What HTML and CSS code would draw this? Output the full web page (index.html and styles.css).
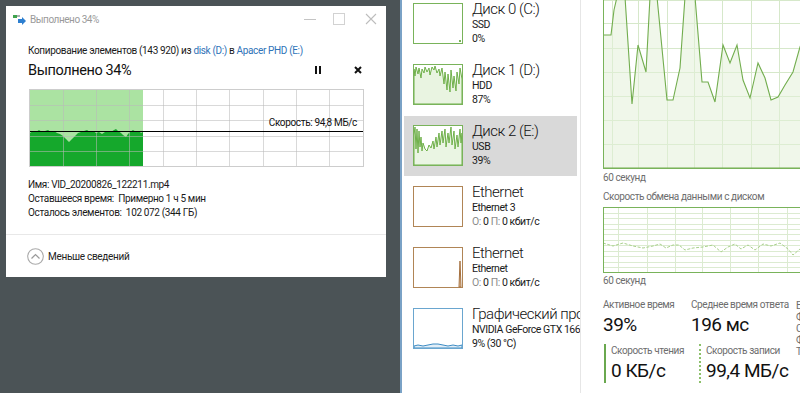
FILE: index.html
```html
<!DOCTYPE html>
<html lang="ru">
<head>
<meta charset="utf-8">
<title>Копирование</title>
<link rel="stylesheet" href="styles.css">
</head>
<body>
<div class="desktop">
  <div class="dialog">
    <div class="titlebar">
      <svg class="title-icon" width="14" height="11" viewBox="0 0 14 11">
        <rect x="0" y="1" width="4" height="3" fill="#3fa34d"/>
        <rect x="4" y="1" width="3" height="2" fill="#a8b0b0"/>
        <path d="M5 5 H9 V3 L13 7 L9 11 V9 H5 Z" fill="#2d7fd0"/>
      </svg>
      <span class="title-text">Выполнено 34%</span>
      <svg class="winctl" width="84" height="26" viewBox="0 0 84 26">
        <line x1="2" y1="13.5" x2="14" y2="13.5" stroke="#c4c4c4"/>
        <rect x="31.5" y="7.5" width="11" height="11" fill="none" stroke="#d2d2d2"/>
        <path d="M64 8 L74 18 M74 8 L64 18" stroke="#bdbdbd" stroke-width="1.1"/>
      </svg>
    </div>
    <div class="content">
      <div class="from">Копирование элементов (143 920) из <span class="link">disk (D:)</span> в <span class="link">Apacer PHD (E:)</span></div>
      <div class="status-row">
        <span class="big">Выполнено 34%</span>
        <span class="ctl-btn"><svg width="10" height="10" viewBox="0 0 10 10"><rect x="2" y="1" width="2" height="8" fill="#111"/><rect x="6" y="1" width="2" height="8" fill="#111"/></svg></span>
        <span class="ctl-btn"><svg width="10" height="10" viewBox="0 0 10 10"><path d="M2 2 L8 8 M8 2 L2 8" stroke="#111" stroke-width="2"/></svg></span>
      </div>
      <div class="copy-graph">
        <svg width="333" height="76" viewBox="0 0 333 76">
          <rect x="0" y="0" width="113" height="76" fill="#abe3a2"/>
          <path d="M0 43 L3 41 L6 42 L9 40 L12 42 L15 41 L18 40 L21 42 L24 41 L27 43 L30 44 L33 46 L36 49 L39 52 L42 49 L45 46 L48 43 L51 42 L54 41 L57 40 L60 42 L63 41 L66 43 L69 42 L72 44 L75 42 L78 41 L81 42 L84 40 L86 39 L88 41 L91 43 L93 45 L96 47 L98 44 L100 42 L103 40 L106 42 L109 41 L111 43 L113 42 L113 76 L0 76 Z" fill="#15a82c"/>
          <g stroke="#b9b9b9" stroke-opacity="0.55" stroke-width="1">
            <line x1="33.5" y1="0" x2="33.5" y2="76"/>
            <line x1="66.5" y1="0" x2="66.5" y2="76"/>
            <line x1="99.5" y1="0" x2="99.5" y2="76"/>
            <line x1="133.5" y1="0" x2="133.5" y2="76"/>
            <line x1="166.5" y1="0" x2="166.5" y2="76"/>
            <line x1="199.5" y1="0" x2="199.5" y2="76"/>
            <line x1="233.5" y1="0" x2="233.5" y2="76"/>
            <line x1="266.5" y1="0" x2="266.5" y2="76"/>
            <line x1="299.5" y1="0" x2="299.5" y2="76"/>
            <line x1="0" y1="15.5" x2="333" y2="15.5"/>
            <line x1="0" y1="30.5" x2="333" y2="30.5"/>
            <line x1="0" y1="46.5" x2="333" y2="46.5"/>
            <line x1="0" y1="61.5" x2="333" y2="61.5"/>
          </g>
          <line x1="0" y1="41.5" x2="333" y2="41.5" stroke="#000" stroke-width="1.2"/>
        </svg>
        <span class="speed">Скорость: 94,8 МБ/с</span>
      </div>
      <div class="info">
        <div>Имя: VID_20200826_122211.mp4</div>
        <div>Оставшееся время:  Примерно 1 ч 5 мин</div>
        <div>Осталось элементов:  102 072 (344 ГБ)</div>
      </div>
    </div>
    <div class="footer">
      <svg width="17" height="17" viewBox="0 0 17 17">
        <circle cx="8.5" cy="8.5" r="7.8" fill="none" stroke="#ababab" stroke-width="1.1"/>
        <path d="M4.5 10.5 L8.5 6.5 L12.5 10.5" fill="none" stroke="#9a9a9a" stroke-width="1.2"/>
      </svg>
      <span class="less">Меньше сведений</span>
    </div>
  </div>
</div>

<div class="taskmgr">
  <div class="list">
    <div class="item">
      <svg class="thumb" width="50" height="41" viewBox="0 0 50 41">
        <rect x="0.5" y="0.5" width="49" height="40" fill="#fff" stroke="#79b35a"/>
        <rect x="46" y="37" width="2" height="2" fill="#79b35a"/>
      </svg>
      <div class="meta">
        <div class="name">Диск 0 (C:)</div>
        <div class="sub">SSD</div>
        <div class="sub">0%</div>
      </div>
    </div>
    <div class="item">
      <svg class="thumb" width="50" height="41" viewBox="0 0 50 41">
        <rect x="0.5" y="0.5" width="49" height="40" fill="#fff" stroke="#79b35a"/>
        <path d="M1 5 L2 12 L3 3 L5 10 L6 4 L8 14 L9 5 L11 9 L12 3 L14 8 L16 4 L17 11 L19 3 L21 6 L22 2 L24 9 L26 5 L27 12 L29 4 L31 20 L32 8 L34 26 L35 10 L37 28 L38 6 L40 24 L41 12 L43 27 L44 8 L46 20 L47 4 L49 15 L49 40 L1 40 Z" fill="#e9f4e1" stroke="#6fb04a" stroke-width="1"/>
        <rect x="0.5" y="0.5" width="49" height="40" fill="none" stroke="#79b35a"/>
      </svg>
      <div class="meta">
        <div class="name">Диск 1 (D:)</div>
        <div class="sub">HDD</div>
        <div class="sub">87%</div>
      </div>
    </div>
    <div class="item selected">
      <svg class="thumb" width="50" height="41" viewBox="0 0 50 41">
        <rect x="0.5" y="0.5" width="49" height="40" fill="#fff" stroke="#79b35a"/>
        <path d="M1 10 L2 2 L3 24 L4 4 L5 28 L6 6 L7 22 L8 12 L9 26 L10 18 L12 24 L14 26 L16 20 L18 23 L20 16 L21 24 L23 12 L24 22 L26 8 L27 20 L29 6 L30 18 L32 4 L33 22 L35 8 L36 18 L38 2 L39 20 L41 6 L42 24 L44 10 L45 22 L47 4 L48 18 L49 8 L49 40 L1 40 Z" fill="#eaf5e3" stroke="#6fb04a" stroke-width="1"/>
        <rect x="0.5" y="0.5" width="49" height="40" fill="none" stroke="#79b35a"/>
      </svg>
      <div class="meta">
        <div class="name">Диск 2 (E:)</div>
        <div class="sub">USB</div>
        <div class="sub">39%</div>
      </div>
    </div>
    <div class="item">
      <svg class="thumb" width="50" height="41" viewBox="0 0 50 41">
        <rect x="0.5" y="0.5" width="49" height="40" fill="#fff" stroke="#b08556"/>
      </svg>
      <div class="meta">
        <div class="name">Ethernet</div>
        <div class="sub">Ethernet 3</div>
        <div class="sub"><span class="dim">О:</span> 0 <span class="dim">П:</span> 0 кбит/с</div>
      </div>
    </div>
    <div class="item">
      <svg class="thumb" width="50" height="41" viewBox="0 0 50 41">
        <rect x="0.5" y="0.5" width="49" height="40" fill="#fff" stroke="#b08556"/>
        <path d="M46 40 L47 14 L48 40 Z" fill="#e9c9a6" stroke="#a5703f" stroke-width="1"/>
      </svg>
      <div class="meta">
        <div class="name">Ethernet</div>
        <div class="sub">Ethernet</div>
        <div class="sub"><span class="dim">О:</span> 0 <span class="dim">П:</span> 0 кбит/с</div>
      </div>
    </div>
    <div class="item">
      <svg class="thumb" width="50" height="41" viewBox="0 0 50 41">
        <rect x="0.5" y="0.5" width="49" height="40" fill="#fff" stroke="#6aa6cf"/>
        <path d="M1 38 L5 37 L10 38 L15 37 L20 36 L25 36 L30 37 L35 38 L40 37 L45 38 L49 37 L49 40 L1 40 Z" fill="#e2eef7" stroke="#3d8cc4" stroke-width="1"/>
        <rect x="0.5" y="0.5" width="49" height="40" fill="none" stroke="#6aa6cf"/>
      </svg>
      <div class="meta">
        <div class="name">Графический процессор 0</div>
        <div class="sub">NVIDIA GeForce GTX 1660 SUPER</div>
        <div class="sub">9% (30 °C)</div>
      </div>
    </div>
  </div>

  <div class="detail">
    <svg class="big-graph" width="220" height="169" viewBox="0 0 220 169">
      <g stroke="#d6e8ca" stroke-width="1">
        <line x1="9.5" y1="0" x2="9.5" y2="168"/>
        <line x1="35.5" y1="0" x2="35.5" y2="168"/>
        <line x1="64.5" y1="0" x2="64.5" y2="168"/>
        <line x1="91.5" y1="0" x2="91.5" y2="168"/>
        <line x1="119.5" y1="0" x2="119.5" y2="168"/>
        <line x1="148.5" y1="0" x2="148.5" y2="168"/>
        <line x1="176.5" y1="0" x2="176.5" y2="168"/>
        <line x1="204.5" y1="0" x2="204.5" y2="168"/>
        <line x1="0" y1="0.5" x2="220" y2="0.5"/>
        <line x1="0" y1="23.5" x2="220" y2="23.5"/>
        <line x1="0" y1="48.5" x2="220" y2="48.5"/>
        <line x1="0" y1="72.5" x2="220" y2="72.5"/>
        <line x1="0" y1="96.5" x2="220" y2="96.5"/>
        <line x1="0" y1="120.5" x2="220" y2="120.5"/>
        <line x1="0" y1="144.5" x2="220" y2="144.5"/>
      </g>
      <path d="M0 35 L8 35 L11 10 L14 -3 L22 -3 L29 104 L35 45 L43 72 L47 -3 L54 -3 L64 100 L70 100 L77 68 L82 -3 L92 -3 L99 82 L105 82 L112 102 L120 45 L127 63 L134 45 L140 80 L147 98 L155 63 L162 78 L168 100 L175 97 L182 85 L190 72 L197 47 L205 25 L220 20 L220 168 L0 168 Z" fill="#e3f0d9" fill-opacity="0.55" stroke="#72ad4e" stroke-width="1.1"/>
      <line x1="0.5" y1="0" x2="0.5" y2="168" stroke="#79b35a"/>
      <line x1="0" y1="168.5" x2="220" y2="168.5" stroke="#79b35a"/>
    </svg>
    <div class="caption cap1">60 секунд</div>
    <div class="caption cap-title">Скорость обмена данными с диском</div>
    <svg class="rate-graph" width="220" height="66" viewBox="0 0 220 66">
      <g stroke="#dcebd1" stroke-width="1">
        <line x1="15.5" y1="0" x2="15.5" y2="66"/>
        <line x1="44.5" y1="0" x2="44.5" y2="66"/>
        <line x1="72.5" y1="0" x2="72.5" y2="66"/>
        <line x1="99.5" y1="0" x2="99.5" y2="66"/>
        <line x1="127.5" y1="0" x2="127.5" y2="66"/>
        <line x1="155.5" y1="0" x2="155.5" y2="66"/>
        <line x1="184.5" y1="0" x2="184.5" y2="66"/>
        <line x1="212.5" y1="0" x2="212.5" y2="66"/>
        <line x1="0" y1="6.5" x2="220" y2="6.5"/>
        <line x1="0" y1="11.5" x2="220" y2="11.5"/>
        <line x1="0" y1="17.5" x2="220" y2="17.5"/>
        <line x1="0" y1="22.5" x2="220" y2="22.5"/>
        <line x1="0" y1="27.5" x2="220" y2="27.5"/>
        <line x1="0" y1="33.5" x2="220" y2="33.5"/>
        <line x1="0" y1="38.5" x2="220" y2="38.5"/>
        <line x1="0" y1="44.5" x2="220" y2="44.5"/>
        <line x1="0" y1="49.5" x2="220" y2="49.5"/>
        <line x1="0" y1="55.5" x2="220" y2="55.5"/>
        <line x1="0" y1="60.5" x2="220" y2="60.5"/>
      </g>
      <path d="M0 36 L10 39 L20 36 L30 39 L40 41 L50 39 L57 37 L63 41 L70 38 L76 38 L82 43 L90 41 L100 40 L110 38 L118 45 L125 40 L132 37 L138 42 L145 38 L152 43 L160 37 L168 39 L177 36 L185 42 L190 48 L197 42 L205 37 L212 40 L220 38" fill="none" stroke="#a9d18c" stroke-width="1" stroke-dasharray="3 1.5"/>
      <rect x="0.5" y="0.5" width="230" height="65" fill="none" stroke="#79b35a"/>
    </svg>
    <div class="caption cap2">60 секунд</div>
    <div class="stats-area">
      <div class="stats-main">
        <div class="stats">
          <div class="stat s1">
            <div class="label">Активное время</div>
            <div class="value">39%</div>
          </div>
          <div class="stat s2">
            <div class="label">Среднее время ответа</div>
            <div class="value">196 мс</div>
          </div>
        </div>
        <div class="stats rw">
          <div class="stat r1">
            <div class="label">Скорость чтения</div>
            <div class="value">0 КБ/с</div>
          </div>
          <div class="stat r2">
            <div class="label">Скорость записи</div>
            <div class="value">99,4 МБ/с</div>
          </div>
        </div>
      </div>
      <div class="props">
        <div>Емкость:</div>
        <div>Форматировано:</div>
        <div>Системный диск:</div>
        <div>Файл подкачки:</div>
        <div>Тип:</div>
      </div>
    </div>
  </div>
</div>
</body>
</html>
```
FILE: styles.css
```css
html, body {
  margin: 0;
  padding: 0;
}
body {
  width: 800px;
  height: 393px;
  overflow: hidden;
  display: flex;
  font-family: Roboto, "Noto Sans", "Liberation Sans", sans-serif;
  color: #1a1a1a;
  background: #4b5356;
}

/* ---------- left: desktop with copy dialog ---------- */
.desktop {
  width: 400px;
  flex: none;
  box-sizing: border-box;
  padding: 6px 0 0 6px;
  background: #4b5356;
}
.dialog {
  width: 380px;
  height: 271px;
  background: #fff;
  display: flex;
  flex-direction: column;
}
.titlebar {
  height: 26px;
  flex: none;
  display: flex;
  align-items: center;
  padding-left: 7px;
  font-size: 10px;
  color: #9a9a9a;
}
.title-icon {
  display: block;
  margin-right: 3px;
}
.title-text {
  flex: 1;
  letter-spacing: -0.45px;
}
.winctl {
  display: block;
}
.content {
  padding: 12px 22px 14px 22px;
  border-bottom: 1px solid #e8e8e8;
}
.from {
  font-size: 10px;
  line-height: 14px;
  letter-spacing: -0.35px;
  white-space: nowrap;
}
.link {
  color: #2f73b8;
}
.status-row {
  margin-top: 2px;
  height: 20px;
  display: flex;
  align-items: center;
  margin-right: -4px;
}
.big {
  flex: 1;
  font-size: 14.5px;
  color: #111;
  letter-spacing: -0.4px;
}
.ctl-btn {
  width: 20px;
  height: 20px;
  display: flex;
  align-items: center;
  justify-content: center;
  margin-left: 20px;
}
.copy-graph {
  position: relative;
  margin: 9px 0 0 1px;
  width: 335px;
  height: 78px;
  box-sizing: border-box;
  border: 1px solid #cdcdcd;
}
.copy-graph svg {
  display: block;
}
.speed {
  position: absolute;
  right: 6px;
  top: 27px;
  font-size: 10px;
  line-height: 12px;
  letter-spacing: -0.35px;
  color: #111;
}
.info {
  margin-top: 11px;
  font-size: 10px;
  line-height: 14px;
  letter-spacing: -0.35px;
}
.info div {
  white-space: pre;
}
.footer {
  flex: 1;
  display: flex;
  align-items: center;
  padding-left: 21px;
}
.footer svg {
  display: block;
}
.less {
  margin-left: 4px;
  font-size: 10px;
  letter-spacing: -0.3px;
  color: #222;
}

/* ---------- right: task manager ---------- */
.taskmgr {
  flex: 1;
  min-width: 0;
  display: flex;
  background: #fff;
  border-left: 2px solid #7aa2c6;
  overflow: hidden;
}
.list {
  width: 178px;
  flex: none;
  border-right: 1px solid #e6e6e6;
  margin-top: -6px;
  overflow: hidden;
}
.item {
  height: 60px;
  margin: 0 3px 1px 2px;
  padding-left: 9px;
  display: flex;
  align-items: flex-start;
  white-space: nowrap;
}
.item.selected {
  background: #d9d9d9;
}
.thumb {
  display: block;
  flex: none;
  margin-top: 9px;
}
.meta {
  margin-left: 9px;
  padding-top: 6px;
}
.name {
  font-size: 15px;
  line-height: 18px;
  font-weight: 300;
  letter-spacing: -0.5px;
  color: #111;
}
.sub {
  font-size: 10.5px;
  line-height: 14px;
  letter-spacing: -0.45px;
  color: #1a1a1a;
}
.dim {
  color: #8a8a8a;
}

.detail {
  flex: 1;
  min-width: 0;
  padding-left: 22px;
  overflow: hidden;
}
.big-graph, .rate-graph {
  display: block;
}
.caption {
  font-size: 10px;
  line-height: 14px;
  letter-spacing: -0.4px;
  color: #6d6d6d;
  white-space: nowrap;
}
.cap1 { margin-top: 2px; }
.cap-title { margin-top: 5px; }
.rate-graph { margin-top: 3px; }
.cap2 { margin-top: 1px; }

.stats-area {
  display: flex;
  align-items: flex-start;
  margin-top: 10px;
}
.stats-main {
  flex: none;
  width: 193px;
}
.stats {
  display: flex;
  align-items: flex-start;
  white-space: nowrap;
}
.stat {
  flex: none;
}
.stat .label {
  font-size: 10px;
  line-height: 14px;
  letter-spacing: -0.4px;
  color: #6d6d6d;
}
.stat .value {
  margin-top: 1px;
  font-size: 19px;
  line-height: 24px;
  color: #111;
  letter-spacing: -0.5px;
}
.s1 { width: 88px; }
.s2 { width: 105px; }
.props {
  flex: none;
  font-size: 10px;
  line-height: 11.5px;
  letter-spacing: -0.4px;
  color: #6d6d6d;
  padding-top: 2px;
  white-space: nowrap;
}
.stats.rw {
  margin-top: 7px;
  margin-left: 1px;
}
.r1 {
  width: 95px;
  box-sizing: border-box;
  border-left: 2px solid #6aa84f;
  padding-left: 5px;
}
.r2 {
  border-left: 2px dotted #8cc06a;
  padding-left: 5px;
}
```
